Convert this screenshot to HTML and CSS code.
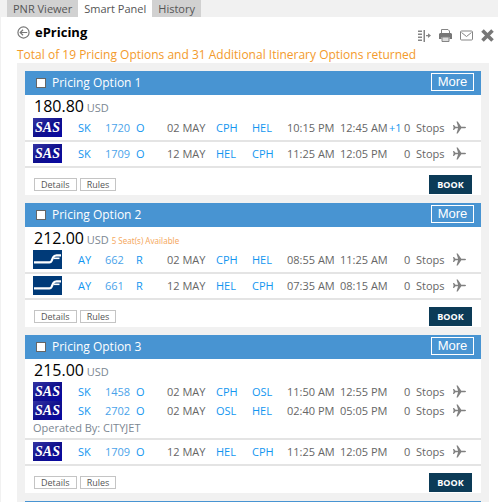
FILE: index.html
```html
<!DOCTYPE html>
<html lang="en">
<head>
    <meta charset="UTF-8">
    <meta name="viewport" content="width=device-width, initial-scale=1.0">
    <title>ePricing</title>
    <link rel="stylesheet" href="styles.css">
</head>
<body>
    <!-- Shared icons -->
    <svg class="defs" aria-hidden="true">
        <symbol id="plane" viewBox="0 0 13 13">
            <path d="M0 4h1l1.500 1.800h2.600L3.500.5h1.200l3.600 5.300H12c.6 0 1 .3 1 .7s-.4.7-1 .7H8.300L4.700 12.500H3.500l1.600-5.300H2.500L1 9H0l.6-2.500z" fill="#808080"/>
        </symbol>
        <symbol id="finnair" viewBox="0 0 29 19">
            <rect width="29" height="19" fill="#003a78"/>
            <path d="M1 12.300h15.500c1 0 1.500-.4 2-1.400l1.700-3.600c.7-1.500 1.600-2 3.400-2H28" fill="none" stroke="#fff" stroke-width="2.200"/>
            <path d="M21 8.300h5.500" fill="none" stroke="#fff" stroke-width="1.600"/>
        </symbol>
    </svg>

    <nav class="tabs">
        <button class="tab">PNR Viewer</button>
        <button class="tab active">Smart Panel</button>
        <button class="tab">History</button>
    </nav>

    <main class="panel">
        <header class="panel-header">
            <button class="icon-btn" aria-label="Back">
                <svg width="13" height="13" viewBox="0 0 14 14" fill="none" stroke="#777" stroke-width="1.300">
                    <circle cx="7" cy="7" r="6"/>
                    <path d="M11 7H3.500M6.500 4l-3 3 3 3"/>
                </svg>
            </button>
            <h1>ePricing</h1>
            <div class="tools">
                <button class="icon-btn" aria-label="Dock panel">
                    <svg width="13" height="13" viewBox="0 0 13 13">
                        <path d="M0 1.500h4v1.500H0zM0 4.500h4V6H0zM0 7.500h4V9H0zM0 10.500h4V12H0zM5.500 1H7v12H5.500zM8 6h2V4.200l3 2.400L10 9V7.200H8z" fill="#858585"/>
                    </svg>
                </button>
                <button class="icon-btn" aria-label="Print">
                    <svg width="13" height="13" viewBox="0 0 13 13">
                        <path d="M2.500 4V.5h6.500l1.500 1.500v2" fill="#fff" stroke="#858585"/>
                        <path d="M1 4h11l1 1v5h-2.500V8h-8v2H0V5z" fill="#777"/>
                        <path d="M3 8h7v4.500H3z" fill="#ddd" stroke="#858585"/>
                    </svg>
                </button>
                <button class="icon-btn" aria-label="Mail">
                    <svg width="13" height="13" viewBox="0 0 13 13" fill="none" stroke="#858585">
                        <rect x=".5" y="2" width="12" height="9" rx="1"/>
                        <path d="M1.500 3.500l5 4 5-4"/>
                    </svg>
                </button>
                <button class="icon-btn" aria-label="Close">
                    <svg width="13" height="13" viewBox="0 0 13 13" stroke="#777" stroke-width="3.600">
                        <path d="M1.500 1.500l10 10M11.500 1.500l-10 10"/>
                    </svg>
                </button>
            </div>
        </header>
        <p class="summary">Total of 19 Pricing Options and 31 Additional Itinerary Options returned</p>

        <div class="results">
            <!-- Option 1 -->
            <section class="card">
                <div class="card-header">
                    <input type="checkbox" id="option1">
                    <label for="option1">Pricing Option 1</label>
                    <button class="more">More</button>
                </div>
                <div class="price"><span class="amount">180.80</span> <span class="currency">USD</span></div>
                <table class="flights">
                    <colgroup>
                        <col class="c-logo"><col class="c-code"><col class="c-number"><col class="c-class"><col class="c-date"><col class="c-from"><col class="c-to"><col class="c-depart"><col class="c-arrive"><col class="c-day"><col class="c-count"><col class="c-stops"><col class="c-plane">
                    </colgroup>
                    <tbody>
                        <tr>
                            <td class="first"><span class="sas">SAS</span></td>
                            <td class="blue">SK</td><td class="number">1720</td><td class="blue">O</td>
                            <td>02 MAY</td><td class="blue">CPH</td><td class="blue">HEL</td>
                            <td>10:15 PM</td><td>12:45 AM</td><td class="blue">+1</td>
                            <td>0</td><td>Stops</td>
                            <td><svg class="plane"><use href="#plane"/></svg></td>
                        </tr>
                    </tbody>
                    <tbody>
                        <tr>
                            <td class="first"><span class="sas">SAS</span></td>
                            <td class="blue">SK</td><td class="number">1709</td><td class="blue">O</td>
                            <td>12 MAY</td><td class="blue">HEL</td><td class="blue">CPH</td>
                            <td>11:25 AM</td><td>12:05 PM</td><td></td>
                            <td>0</td><td>Stops</td>
                            <td><svg class="plane"><use href="#plane"/></svg></td>
                        </tr>
                    </tbody>
                </table>
                <div class="card-footer">
                    <button class="small">Details</button>
                    <button class="small">Rules</button>
                    <button class="book">BOOK</button>
                </div>
            </section>

            <!-- Option 2 -->
            <section class="card">
                <div class="card-header">
                    <input type="checkbox" id="option2">
                    <label for="option2">Pricing Option 2</label>
                    <button class="more">More</button>
                </div>
                <div class="price"><span class="amount">212.00</span> <span class="currency">USD</span> <span class="seats">5 Seat(s) Available</span></div>
                <table class="flights">
                    <colgroup>
                        <col class="c-logo"><col class="c-code"><col class="c-number"><col class="c-class"><col class="c-date"><col class="c-from"><col class="c-to"><col class="c-depart"><col class="c-arrive"><col class="c-day"><col class="c-count"><col class="c-stops"><col class="c-plane">
                    </colgroup>
                    <tbody>
                        <tr>
                            <td class="first"><svg class="finnair"><use href="#finnair"/></svg></td>
                            <td class="blue">AY</td><td class="number">662</td><td class="blue">R</td>
                            <td>02 MAY</td><td class="blue">CPH</td><td class="blue">HEL</td>
                            <td>08:55 AM</td><td>11:25 AM</td><td></td>
                            <td>0</td><td>Stops</td>
                            <td><svg class="plane"><use href="#plane"/></svg></td>
                        </tr>
                    </tbody>
                    <tbody>
                        <tr>
                            <td class="first"><svg class="finnair"><use href="#finnair"/></svg></td>
                            <td class="blue">AY</td><td class="number">661</td><td class="blue">R</td>
                            <td>12 MAY</td><td class="blue">HEL</td><td class="blue">CPH</td>
                            <td>07:35 AM</td><td>08:15 AM</td><td></td>
                            <td>0</td><td>Stops</td>
                            <td><svg class="plane"><use href="#plane"/></svg></td>
                        </tr>
                    </tbody>
                </table>
                <div class="card-footer">
                    <button class="small">Details</button>
                    <button class="small">Rules</button>
                    <button class="book">BOOK</button>
                </div>
            </section>

            <!-- Option 3 -->
            <section class="card">
                <div class="card-header">
                    <input type="checkbox" id="option3">
                    <label for="option3">Pricing Option 3</label>
                    <button class="more">More</button>
                </div>
                <div class="price"><span class="amount">215.00</span> <span class="currency">USD</span></div>
                <table class="flights">
                    <colgroup>
                        <col class="c-logo"><col class="c-code"><col class="c-number"><col class="c-class"><col class="c-date"><col class="c-from"><col class="c-to"><col class="c-depart"><col class="c-arrive"><col class="c-day"><col class="c-count"><col class="c-stops"><col class="c-plane">
                    </colgroup>
                    <tbody>
                        <tr>
                            <td class="first"><span class="sas">SAS</span></td>
                            <td class="blue">SK</td><td class="number">1458</td><td class="blue">O</td>
                            <td>02 MAY</td><td class="blue">CPH</td><td class="blue">OSL</td>
                            <td>11:50 AM</td><td>12:55 PM</td><td></td>
                            <td>0</td><td>Stops</td>
                            <td><svg class="plane"><use href="#plane"/></svg></td>
                        </tr>
                        <tr>
                            <td class="first"><span class="sas">SAS</span></td>
                            <td class="blue">SK</td><td class="number">2702</td><td class="blue">O</td>
                            <td>02 MAY</td><td class="blue">OSL</td><td class="blue">HEL</td>
                            <td>02:40 PM</td><td>05:05 PM</td><td></td>
                            <td>0</td><td>Stops</td>
                            <td><svg class="plane"><use href="#plane"/></svg></td>
                        </tr>
                        <tr class="operated">
                            <td class="first" colspan="13">Operated By: CITYJET</td>
                        </tr>
                    </tbody>
                    <tbody>
                        <tr>
                            <td class="first"><span class="sas">SAS</span></td>
                            <td class="blue">SK</td><td class="number">1709</td><td class="blue">O</td>
                            <td>12 MAY</td><td class="blue">HEL</td><td class="blue">CPH</td>
                            <td>11:25 AM</td><td>12:05 PM</td><td></td>
                            <td>0</td><td>Stops</td>
                            <td><svg class="plane"><use href="#plane"/></svg></td>
                        </tr>
                    </tbody>
                </table>
                <div class="card-footer">
                    <button class="small">Details</button>
                    <button class="small">Rules</button>
                    <button class="book">BOOK</button>
                </div>
            </section>

            <section class="card">
                <div class="card-header"></div>
            </section>
        </div>
    </main>
</body>
</html>
```

FILE: styles.css
```css
* {
    box-sizing: border-box;
}
body {
    margin: 0;
    height: 100vh;
    overflow: hidden;
    display: flex;
    flex-direction: column;
    background-color: #f1f1f1;
    font-family: "Open Sans", "Noto Sans", sans-serif;
    font-size: 11px;
    color: #666;
}
button {
    margin: 0;
    padding: 0;
    border: none;
    background: none;
    font-family: inherit;
    color: inherit;
    white-space: nowrap;
    cursor: pointer;
}
.defs {
    display: none;
}
.tabs {
    display: flex;
    flex: none;
    padding-left: 7px;
}
.tab {
    height: 17px;
    padding: 0 6px;
    font-size: 11px;
    line-height: 17px;
    color: #555;
    background-color: #d1d1d1;
}
.tab.active {
    background-color: #fff;
}
.panel {
    flex: 1;
    min-height: 0;
    overflow: hidden;
    margin-left: 1px;
    padding: 0 9px 0 16px;
    background-color: #fff;
}
.panel-header {
    display: flex;
    align-items: center;
    height: 30px;
}
.icon-btn {
    display: flex;
}
h1 {
    margin: 0 0 0 5px;
    font-size: 13px;
    line-height: 18px;
    color: #000;
}
.tools {
    display: flex;
    gap: 8px;
    margin: 6px -5px 0 auto;
}
.summary {
    margin: 0;
    font-size: 12px;
    line-height: 16px;
    white-space: nowrap;
    color: #f39a2b;
}
.results {
    display: flex;
    flex-direction: column;
    gap: 8px;
    padding: 8px;
    background-color: #f1f1f1;
}
.card {
    background-color: #fff;
}
.card-header {
    display: flex;
    align-items: center;
    height: 24px;
    padding: 0 7px 0 11px;
    background-color: #4894d2;
    color: #fff;
}
.card-header input {
    appearance: none;
    width: 10px;
    height: 10px;
    margin: 0 6px 0 0;
    border: 1px solid #666;
    background-color: #fff;
}
.card-header label {
    font-size: 12px;
    line-height: 18px;
}
.more {
    height: 18px;
    min-width: 43px;
    margin: 0 0 2px auto;
    border: 1px solid #fff;
    font-family: "Liberation Sans", Arial, sans-serif;
    font-size: 13px;
    line-height: 16px;
}
.price {
    height: 21px;
    padding-left: 9px;
    line-height: 23px;
    white-space: nowrap;
}
.amount {
    font-size: 16px;
    color: #000;
}
.currency {
    color: #7c8792;
}
.seats {
    font-size: 8px;
    font-family: "Noto Sans", sans-serif;
    color: #f5a962;
}
.flights {
    width: 100%;
    table-layout: fixed;
    border-collapse: separate;
    border-spacing: 0;
}
.c-logo { width: 53px; }
.c-code { width: 27px; }
.c-number { width: 31px; }
.c-class { width: 31px; }
.c-date { width: 49px; }
.c-from { width: 36px; }
.c-to { width: 35px; }
.c-depart { width: 53px; }
.c-arrive { width: 49px; }
.c-day { width: 15px; }
.c-count { width: 12px; }
.c-stops { width: 37px; }
.c-plane { width: 28px; }
td {
    padding: 0;
    line-height: 19px;
    white-space: nowrap;
    vertical-align: top;
}
tr:first-child td {
    padding-top: 2px;
}
tr:last-child td {
    padding-bottom: 3px;
    border-bottom: 2px solid #e4e4e4;
}
td.first {
    padding-left: 8px;
}
.operated td {
    line-height: 15px;
    color: #7c8792;
}
.blue {
    color: #1296f0;
}
.number {
    color: #4aa3ea;
}
.sas {
    display: block;
    width: 29px;
    height: 19px;
    background: linear-gradient(to bottom right, #3434a4, #10108c 50%, #0808a4);
    font: italic bold 14px/19px "Liberation Serif", "Times New Roman", serif;
    text-align: center;
    color: #fff;
}
.finnair {
    display: block;
    width: 29px;
    height: 19px;
}
.plane {
    display: block;
    width: 13px;
    height: 13px;
    margin-top: 3px;
}
.card-footer {
    display: flex;
    align-items: center;
    gap: 3px;
    height: 27px;
    padding: 6px 9px 0;
}
.small {
    height: 13px;
    padding: 0 6px;
    border: 1px solid #c4c4c4;
    font-size: 9px;
    line-height: 12px;
    color: #555;
}
.book {
    height: 19px;
    min-width: 43px;
    margin-left: auto;
    background-color: #0c3b57;
    font-size: 9px;
    font-weight: bold;
    color: #fff;
}
```
